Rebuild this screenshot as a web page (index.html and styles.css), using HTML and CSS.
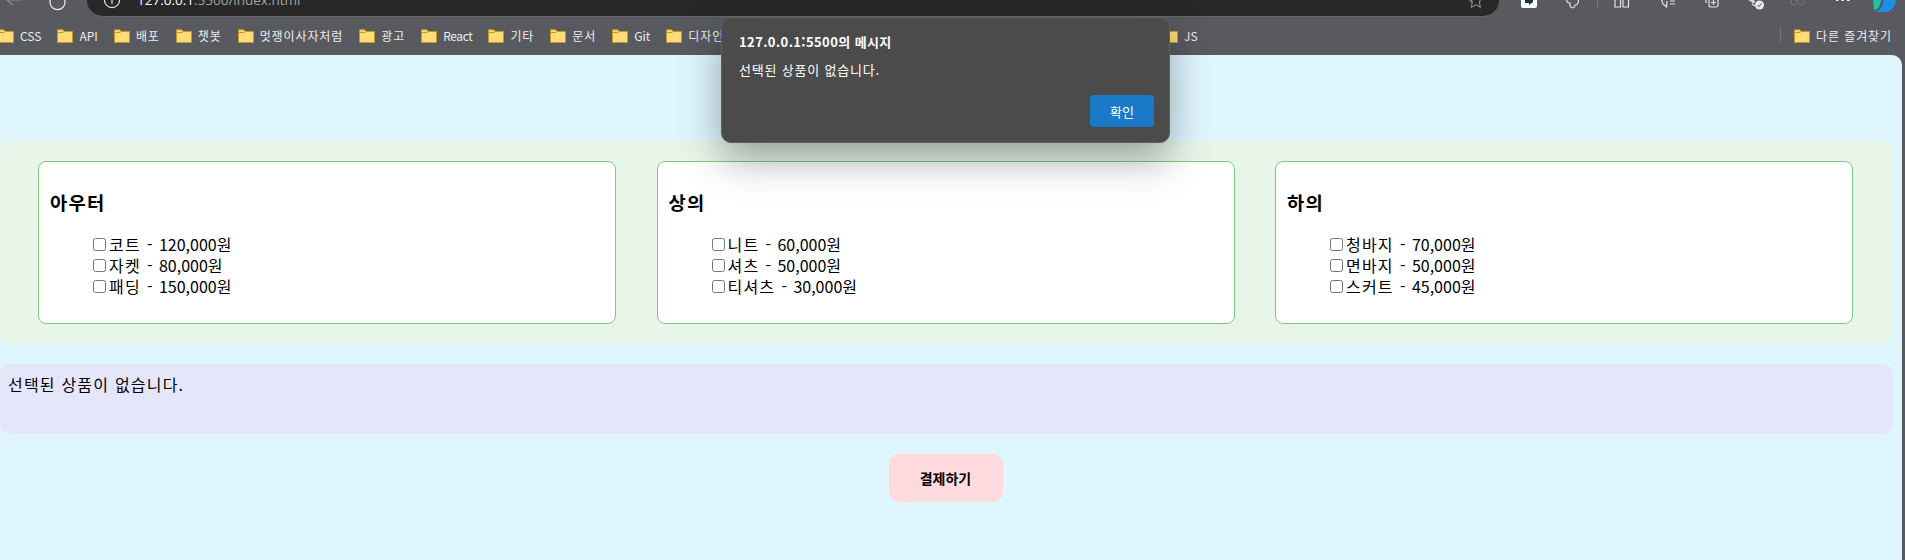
FILE: index.html
```html
<!DOCTYPE html>
<html lang="ko">
<head>
    <meta charset="utf-8">
    <title>쇼핑</title>
    <link rel="stylesheet" href="styles.css">
</head>
<body>
    <svg class="defs" width="0" height="0">
        <symbol id="folder" viewBox="0 0 16 14">
            <path d="M.5 13.5V.8h5.2l1.6 1.7h8.2v11z" fill="#ffdb7a" stroke="#c39a1f"/>
            <path d="M.5 3.5h5.4l1.4-1" fill="none" stroke="#c39a1f"/>
        </symbol>
    </svg>

    <div class="browser-toolbar">
        <svg class="nav-icons" viewBox="0 0 87 16" fill="none">
            <path d="M13 -5 7 0l6 5M7 0h15" stroke="#8a8a8e" stroke-width="1.2"/>
            <path d="M52 -3a7.5 7.5 0 1 0 11 0" stroke="#f0f0f0" stroke-width="1.2"/>
        </svg>
        <div class="address-bar">
            <svg class="info-icon" viewBox="0 0 18 16" fill="none">
                <circle cx="9" cy="0" r="7.6" stroke="#e8e8e8" stroke-width="1.2"/>
                <path d="M9 -1v5" stroke="#e8e8e8" stroke-width="1.2"/>
            </svg>
            <span class="url"><b>127.0.0.1</b>:5500/index.html</span>
            <svg class="star-icon" viewBox="0 0 16 16" fill="none">
                <path d="M3 -3 4.4 3 0.8 -1M12.8 -1l-1.400 3 .9 5.200L8 4.800 3.400 7.200l.9-5.200" stroke="#8f8f93" stroke-width="1.100"/>
            </svg>
        </div>
        <svg class="tool-icons" viewBox="1499 0 406 16" fill="none">
            <path d="M1521 -2h16v8a2 2 0 0 1-2 2h-12a2 2 0 0 1-2-2z" fill="#fff"/>
            <path d="M1525 -1h8v3l-4 3v-2h-4z" fill="#14304f"/>
            <path d="M1567 -1c-1 3 1 4 3 4v3c2 3 5 2 5-1 3 0 4-3 3-6" stroke="#e6e6e6" stroke-width="1.200"/>
            <path d="M1597.500 0v8" stroke="#77777b"/>
            <path d="M1615 -2v9h5.500V-2M1623 -2v9h5.500V-2" stroke="#e6e6e6" stroke-width="1.200"/>
            <path d="M1661 -2l2 6 3.500 3 .5-6M1670 1h5M1670 4h5" stroke="#e6e6e6" stroke-width="1.200"/>
            <path d="M1706 -2v5M1709 -1h9v6a2 2 0 0 1-2 2h-5a2 2 0 0 1-2-2zM1713.500 0v5M1711 2.500h5" stroke="#e6e6e6" stroke-width="1.200"/>
            <path d="M1748 -1l6 4M1751 -1l4 3M1752 4l3 2" stroke="#e6e6e6" stroke-width="1.400"/>
            <circle cx="1759.500" cy="5" r="4.500" fill="#e8e8e8"/>
            <path d="M1757.500 5l1.500 1.500 2.500-3" stroke="#4a4a4f"/>
            <path d="M1791 2a3 3 0 1 0 6 0 3 3 0 1 0-6 0zM1798 2a3 3 0 1 0 6 0 3 3 0 1 0-6 0z" stroke="#77777b"/>
            <path d="M1836 -1h2.500v2H1836zM1841.500 -1h2.500v2h-2.500zM1847 -1h2.500v2H1847z" fill="#f4f4f4"/>
            <path d="M1873 -2h9l-3 9c-1 2-3 3-5 3z" fill="#1fc4a6"/>
            <path d="M1885 -2h11c0 6-3 14-11 14h-10c4-1 6-3 7-6z" fill="#1d8fe8"/>
        </svg>
    </div>

    <div class="bookmarks">
        <a class="bookmark"><svg class="folder"><use href="#folder"/></svg>CSS</a>
        <a class="bookmark"><svg class="folder"><use href="#folder"/></svg>API</a>
        <a class="bookmark bookmark-ko"><svg class="folder"><use href="#folder"/></svg>배포</a>
        <a class="bookmark bookmark-ko"><svg class="folder"><use href="#folder"/></svg>챗봇</a>
        <a class="bookmark bookmark-ko"><svg class="folder"><use href="#folder"/></svg>멋쟁이사자처럼</a>
        <a class="bookmark bookmark-ko"><svg class="folder"><use href="#folder"/></svg>광고</a>
        <a class="bookmark bookmark-narrow"><svg class="folder"><use href="#folder"/></svg>React</a>
        <a class="bookmark bookmark-ko"><svg class="folder"><use href="#folder"/></svg>기타</a>
        <a class="bookmark bookmark-ko"><svg class="folder"><use href="#folder"/></svg>문서</a>
        <a class="bookmark"><svg class="folder"><use href="#folder"/></svg>Git</a>
        <a class="bookmark bookmark-ko"><svg class="folder"><use href="#folder"/></svg>디자인</a>
        <a class="bookmark bookmark-js"><svg class="folder"><use href="#folder"/></svg>JS</a>
        <a class="bookmark bookmark-ko bookmark-other"><svg class="folder"><use href="#folder"/></svg>다른 즐겨찾기</a>
    </div>

    <div class="page">
        <div class="categories">
            <div class="category">
                <h3>아우터</h3>
                <ul class="product-list">
                    <li><input type="checkbox"><span class="product-name">코트</span> - 120,000원</li>
                    <li><input type="checkbox"><span class="product-name">자켓</span> - 80,000원</li>
                    <li><input type="checkbox"><span class="product-name">패딩</span> - 150,000원</li>
                </ul>
            </div>
            <div class="category">
                <h3>상의</h3>
                <ul class="product-list">
                    <li><input type="checkbox"><span class="product-name">니트</span> - 60,000원</li>
                    <li><input type="checkbox"><span class="product-name">셔츠</span> - 50,000원</li>
                    <li><input type="checkbox"><span class="product-name">티셔츠</span> - 30,000원</li>
                </ul>
            </div>
            <div class="category">
                <h3>하의</h3>
                <ul class="product-list">
                    <li><input type="checkbox"><span class="product-name">청바지</span> - 70,000원</li>
                    <li><input type="checkbox"><span class="product-name">면바지</span> - 50,000원</li>
                    <li><input type="checkbox"><span class="product-name">스커트</span> - 45,000원</li>
                </ul>
            </div>
        </div>

        <div class="selected-items">선택된 상품이 없습니다.</div>

        <button class="checkout-button">결제하기</button>
    </div>

    <div class="alert-dialog">
        <div class="alert-title">127.0.0.1:5500의 메시지</div>
        <div class="alert-message">선택된 상품이 없습니다.</div>
        <div class="alert-actions">
            <button class="alert-button">확인</button>
        </div>
    </div>
</body>
</html>
```
FILE: styles.css
```css
* {
    box-sizing: border-box;
}

html, body {
    height: 560px;
}

body {
    margin: 0;
    overflow: hidden;
    display: flex;
    flex-direction: column;
    background-color: #595a60;
    font-family: "Noto Sans CJK KR", "Noto Sans", sans-serif;
    color: #000;
}

.defs {
    position: absolute;
}

/* browser chrome */
.browser-toolbar {
    display: flex;
    height: 16px;
    flex-shrink: 0;
}

.nav-icons {
    width: 87px;
    height: 16px;
    flex-shrink: 0;
}

.address-bar {
    flex: 1;
    display: flex;
    align-items: flex-end;
    overflow: hidden;
    height: 17px;
    padding-left: 16px;
    background-color: #282828;
    border-bottom: 1px solid #68686c;
    border-bottom-left-radius: 16px;
    border-bottom-right-radius: 16px;
}

.info-icon {
    width: 18px;
    height: 16px;
    flex-shrink: 0;
    align-self: flex-start;
}

.url {
    margin-left: 16px;
    margin-bottom: 8px;
    font-family: "Open Sans", sans-serif;
    font-size: 13.5px;
    line-height: 16px;
    color: #a3a3a3;
    white-space: nowrap;
}

.url b {
    font-weight: 400;
    color: #fff;
}

.star-icon {
    width: 16px;
    height: 16px;
    flex-shrink: 0;
    align-self: flex-start;
    margin-left: auto;
    margin-right: 15px;
}

.tool-icons {
    width: 406px;
    height: 16px;
    flex-shrink: 0;
}

.bookmarks {
    display: flex;
    align-items: center;
    height: 39px;
    flex-shrink: 0;
    margin-left: -2px;
    gap: 16px;
    font-size: 12px;
    color: #ececec;
}

.bookmark {
    display: flex;
    align-items: center;
    gap: 6px;
    white-space: nowrap;
}

.bookmark-ko {
    letter-spacing: 0.9px;
}

.bookmark-narrow {
    letter-spacing: -0.4px;
}

.folder {
    width: 16px;
    height: 14px;
    flex-shrink: 0;
}

.bookmark-js {
    margin-left: 422px;
}

.bookmark-other {
    margin-left: auto;
    margin-right: 13px;
    position: relative;
}

/* divider in front of other favorites */
.bookmark-other::before {
    content: "";
    position: absolute;
    left: -14px;
    top: 0;
    height: 16px;
    border-left: 1px solid #77777b;
}

/* page */
.page {
    flex: 1;
    margin-right: 3px;
    padding: 86px 9px 0 0;
    background-color: #dff6ff;
    border-top-right-radius: 10px;
    display: flex;
    flex-direction: column;
    align-items: center;
    gap: 20px;
}

.categories {
    width: 100%;
    display: flex;
    gap: 40.5px;
    padding: 20px 40px 20px 38px;
    background-color: #e8f5e9;
    border-radius: 10px;
}

.category {
    flex: 1;
    padding: 10px;
    background-color: #fff;
    border: 1px solid #81c784;
    border-radius: 8px;
}

.category h3 {
    margin: 16.7px 0 20.7px;
    padding-left: 1px;
    font-size: 18.72px;
    line-height: 25px;
    font-weight: 700;
    letter-spacing: 1.3px;
}

.product-list {
    list-style: none;
    margin: 16px 0;
    padding-left: 40px;
    font-size: 16px;
    line-height: 21px;
    word-spacing: 1.8px;
}

.product-name {
    letter-spacing: 1.2px;
}

.selected-items {
    width: 100%;
    height: 70px;
    padding: 10px 8px;
    background-color: #e6e6fa;
    border-radius: 10px;
    font-size: 16px;
    line-height: 21px;
    letter-spacing: 1.2px;
}

.checkout-button {
    width: 114px;
    height: 48px;
    margin-right: 2px;
    border: none;
    border-radius: 10px;
    background-color: #ffdadf;
    font-family: inherit;
    font-size: 14px;
    font-weight: 700;
    color: #000;
}

/* alert dialog lies over the page */
.alert-dialog {
    position: absolute;
    left: 721px;
    top: 17px;
    width: 449px;
    height: 126px;
    padding: 14px 15px 16px 17px;
    background-color: #4b4b4b;
    border: 1px solid #606060;
    border-radius: 10px;
    box-shadow: 0 16px 40px rgba(0, 0, 0, 0.35);
    color: #fff;
}

.alert-title {
    font-size: 13px;
    line-height: 20px;
    font-weight: 700;
    letter-spacing: 0.4px;
}

.alert-message {
    margin-top: 8px;
    font-size: 13px;
    line-height: 20px;
    letter-spacing: 0.8px;
}

.alert-actions {
    display: flex;
    justify-content: flex-end;
    margin-top: 15px;
}

.alert-button {
    width: 64px;
    height: 32px;
    border: none;
    border-radius: 4px;
    background-color: #1a7ac8;
    font-family: inherit;
    font-size: 13px;
    color: #fff;
}
```
